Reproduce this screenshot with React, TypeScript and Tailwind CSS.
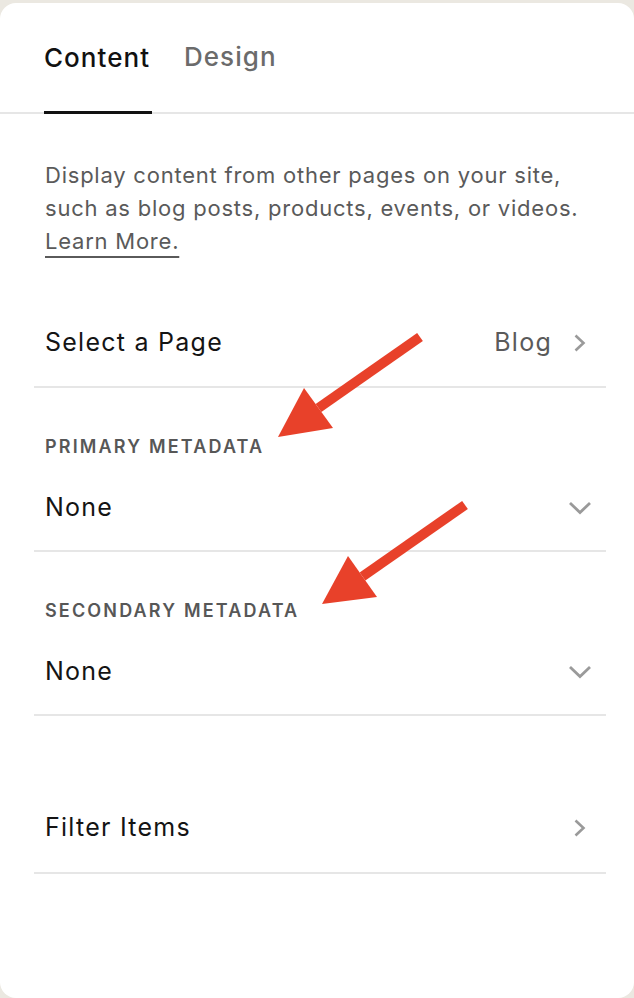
function Arrow({ tail, tip, left, right }: { tail: [number, number]; tip: [number, number]; left: [number, number]; right: [number, number] }) {
  const base: [number, number] = [(left[0] + right[0]) / 2, (left[1] + right[1]) / 2]
  return (
    <g>
      <line x1={tail[0]} y1={tail[1]} x2={base[0]} y2={base[1]} stroke="#e8412a" strokeWidth={10} />
      <polygon points={`${tip[0]},${tip[1]} ${left[0]},${left[1]} ${right[0]},${right[1]}`} fill="#e8412a" />
    </g>
  )
}

function ChevRight() {
  return (
    <svg width={16} height={20} viewBox="0 0 16 20" className="mr-[7px]">
      <path d="M3.5 2.5 L11.5 10 L3.5 17.5" fill="none" stroke="#9a9a9a" strokeWidth={2.6} />
    </svg>
  )
}

function ChevDown() {
  return (
    <svg width={24} height={14} viewBox="0 0 24 14" className="mr-[3px]">
      <path d="M2 2 L12 11.5 L22 2" fill="none" stroke="#9a9a9a" strokeWidth={2.8} />
    </svg>
  )
}

function MetaSection({ label }: { label: string }) {
  return (
    <div className="ml-[34px] mr-[28px] px-[11px] border-b-2 border-[#e6e6e6] h-[164px] flex flex-col">
      <div className="pt-[47px] text-[18px] leading-[24px] font-semibold tracking-[0.12em] text-[#575757]">{label}</div>
      <div className="mt-[34px] flex items-center justify-between h-[30px]">
        <span className="text-[25px] tracking-[0.05em] text-[#141414]">None</span>
        <ChevDown />
      </div>
    </div>
  )
}

export default function App() {
  return (
    <div className="bg-[#ebe8e1] pt-[3px] min-h-[998px] w-[634px] font-['Inter',sans-serif]">
      <div className="relative bg-white rounded-[16px] h-[995px]">
        {/* tabs */}
        <div className="h-[111px] border-b-2 border-[#e6e6e6] flex items-end px-[44px] gap-[32px]">
          <div className="flex flex-col">
            <span className="text-[26px] font-medium tracking-[0.04em] text-[#111] leading-[32px] mb-[37px]">Content</span>
            <div className="h-[3px] w-[108px] bg-[#111] -mb-[2px]" />
          </div>
          <div className="flex flex-col">
            <span className="text-[26px] font-medium tracking-[0.04em] text-[#6b6b6b] leading-[32px] mb-[39px]">Design</span>
          </div>
        </div>

        {/* description */}
        <p className="pt-[45px] px-[45px] text-[22px] leading-[33px] tracking-[0.035em] text-[#5a5a5a] whitespace-nowrap">
          Display content from other pages on your site,
          <br />
          such as blog posts, products, events, or videos.
          <br />
          <span className="underline decoration-[2px] underline-offset-[7px]">Learn More.</span>
        </p>

        {/* select a page */}
        <div className="mt-[42px] ml-[34px] mr-[28px] px-[11px] h-[88px] border-b-2 border-[#e6e6e6] flex items-center justify-between">
          <span className="text-[25px] tracking-[0.05em] text-[#141414]">Select a Page</span>
          <div className="flex items-center gap-[20px]">
            <span className="text-[25px] tracking-[0.05em] text-[#5a5a5a]">Blog</span>
            <ChevRight />
          </div>
        </div>

        <MetaSection label="PRIMARY METADATA" />
        <MetaSection label="SECONDARY METADATA" />

        {/* filter items */}
        <div className="mt-[68px] ml-[34px] mr-[28px] px-[11px] h-[90px] border-b-2 border-[#e6e6e6] flex items-center justify-between">
          <span className="text-[25px] tracking-[0.05em] text-[#141414]">Filter Items</span>
          <ChevRight />
        </div>

        {/* annotation arrows */}
        <svg className="absolute left-0 top-[-3px] pointer-events-none" width={634} height={998}>
          <Arrow tail={[420, 337]} tip={[278, 437]} left={[304, 388]} right={[333, 428]} />
          <Arrow tail={[465, 505]} tip={[322, 604]} left={[348, 556]} right={[377, 597]} />
        </svg>
      </div>
    </div>
  )
}
